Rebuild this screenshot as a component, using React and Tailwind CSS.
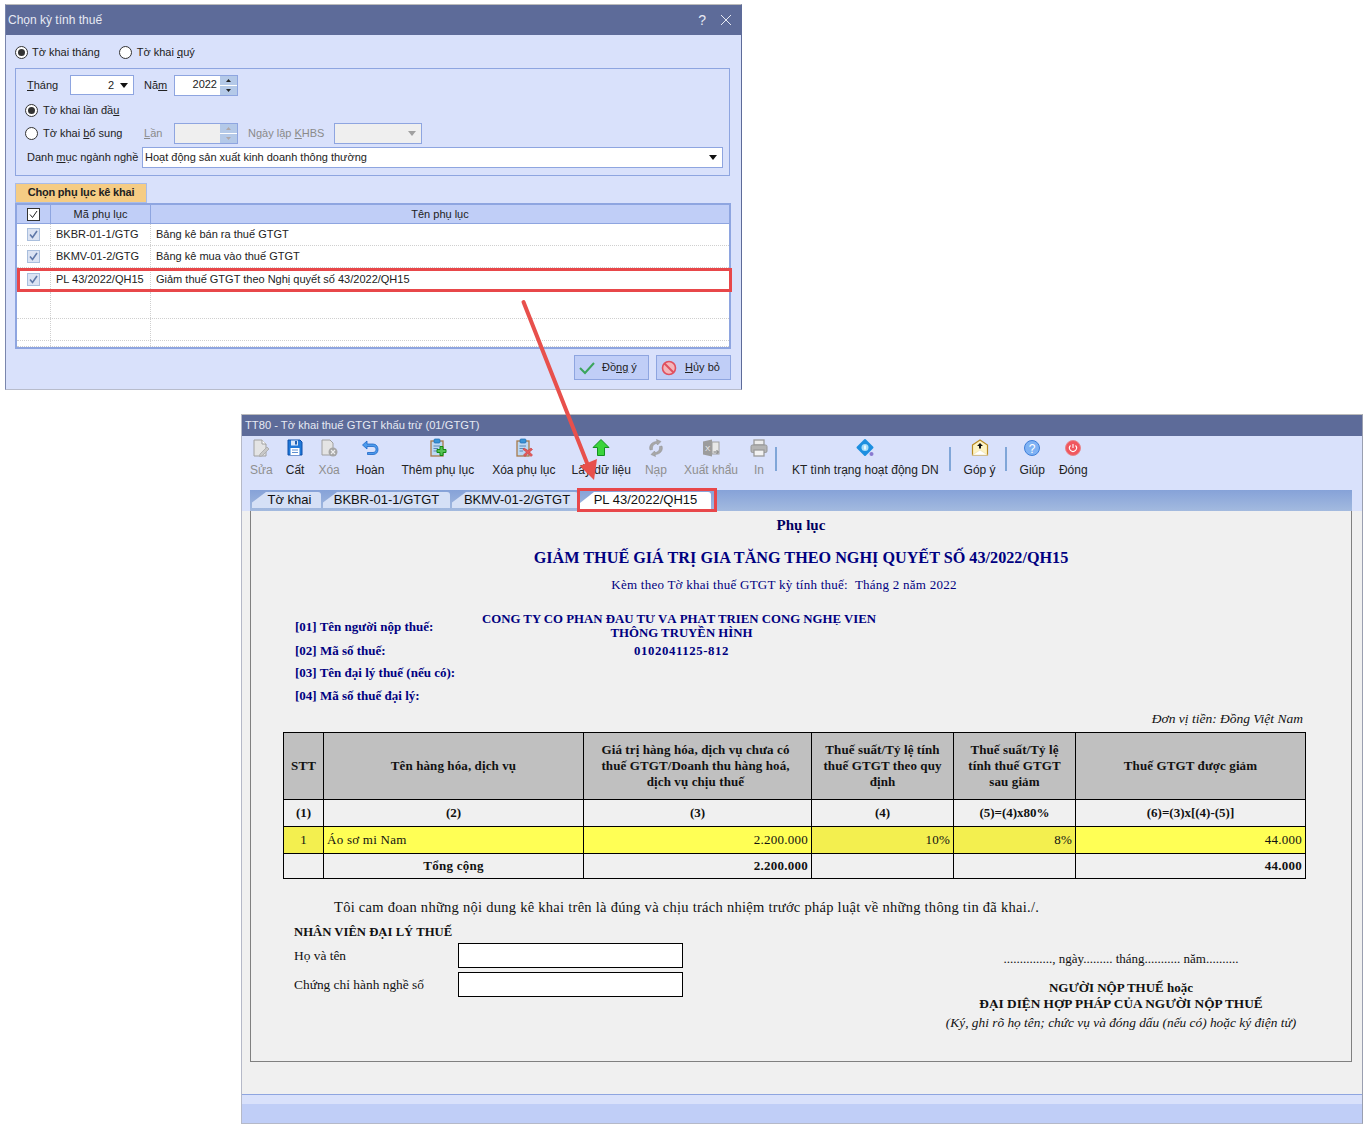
import React from "react";

const Radio = ({ on }) => (
  <span className="w-[13px] h-[13px] rounded-full border border-[#333] bg-white flex items-center justify-center shrink-0">
    {on && <span className="w-[7px] h-[7px] rounded-full bg-[#333]" />}
  </span>
);

const Caret = ({ gray }) => (
  <svg width="8" height="5" viewBox="0 0 8 5" className="shrink-0"><path d="M0 0H8L4 5Z" fill={gray ? "#a0a0a0" : "#111"} /></svg>
);

const Spin = ({ value, disabled }) => (
  <div className={`w-[64px] h-[21px] border border-[#8ea5e0] flex ${disabled ? "bg-[#efefef]" : "bg-white"}`}>
    <div className="flex-1 text-right pr-[3px] leading-[17px]">{value}</div>
    <div className="w-[17px] flex flex-col bg-[#b4c9e8]">
      <div className="flex-1 flex items-center justify-center border-b border-white">
        <svg width="5" height="3" viewBox="0 0 5 3"><path d="M2.5 0L5 3H0Z" fill={disabled ? "#b0a8a8" : "#222"} /></svg>
      </div>
      <div className="flex-1 flex items-center justify-center">
        <svg width="5" height="3" viewBox="0 0 5 3"><path d="M0 0H5L2.5 3Z" fill={disabled ? "#b0a8a8" : "#222"} /></svg>
      </div>
    </div>
  </div>
);

const Check = ({ head }) => (
  <span className={`w-[13px] h-[13px] border flex items-center justify-center ${head ? "bg-white border-[#333]" : "bg-[#dbe3f3] border-[#a9bedd]"}`}>
    <svg width="11" height="11" viewBox="0 0 11 11" fill="none"><path d="M2 5.5L4.5 8.5L9 2" stroke={head ? "#222" : "#5f78a8"} strokeWidth={head ? 1 : 1.6} /></svg>
  </span>
);

const rows = [
  ["BKBR-01-1/GTG", "Bảng kê bán ra thuế GTGT", "h-[22px]"],
  ["BKMV-01-2/GTG", "Bảng kê mua vào thuế GTGT", "h-[22px]"],
  ["PL 43/2022/QH15", "Giảm thuế GTGT theo Nghị quyết số 43/2022/QH15", "h-[24px]"],
  ["", "", "h-[27px]"],
  ["", "", "h-[22px]"],
  ["", "", "h-[6px]"],
];

function Dialog() {
  return (
    <section className="absolute left-[5px] top-[4px] w-[737px] h-[386px] border-t border-[#bbbbbb] border-l border-r border-b border-l-[#7a86ad] border-r-[#5d6b99] border-b-[#b8bccb] bg-[#d9e1fb] flex flex-col text-[11px] text-[#222] whitespace-nowrap">
      <div className="h-[30px] shrink-0 bg-[#5d6b99] text-[#e6e9f3] text-[12px] flex items-center pl-[2px] pr-[9px]">
        <span className="flex-1">Chọn kỳ tính thuế</span>
        <span className="text-[14px] mr-[14px]">?</span>
        <svg width="12" height="12" viewBox="0 0 12 12" fill="none"><path d="M1 1L11 11M11 1L1 11" stroke="#e6e9f3" /></svg>
      </div>
      <div className="flex flex-col pl-[9px] pr-[10px]">
        <div className="flex items-center h-[16px] mt-[9px]">
          <Radio on />
          <span className="ml-[4px]">Tờ khai thán<u>g</u></span>
          <span className="ml-[19px]"><Radio /></span>
          <span className="ml-[5px]">Tờ khai <u>q</u>uý</span>
        </div>
        <div className="mt-[8px] h-[108px] border border-[#8ea5e0] pl-[11px] pr-[6px] pt-[6px] w-[715px]">
          <div className="flex items-center h-[20px]">
            <span className="w-[43px]"><u>T</u>háng</span>
            <div className="w-[64px] h-[20px] bg-white border border-[#8ea5e0] flex items-center justify-end pr-[5px] gap-[6px]">
              <span>2</span>
              <Caret />
            </div>
            <span className="ml-[10px] w-[30px]">Nă<u>m</u></span>
            <Spin value="2022" />
          </div>
          <div className="flex items-center h-[14px] mt-[8px] -ml-[2px]">
            <Radio on />
            <span className="ml-[5px]">Tờ khai lần đầ<u>u</u></span>
          </div>
          <div className="flex items-center h-[21px] mt-[6px] -ml-[2px]">
            <Radio />
            <span className="ml-[5px] w-[101px]">Tờ khai <u>b</u>ổ sung</span>
            <span className="w-[30px] text-[#8a8a8a]"><u>L</u>ần</span>
            <Spin disabled value="" />
            <span className="ml-[10px] w-[86px] text-[#8a8a8a]">Ngày lập <u>K</u>HBS</span>
            <div className="w-[88px] h-[21px] bg-[#efefef] border border-[#8ea5e0] flex items-center justify-end pr-[5px]">
              <Caret gray />
            </div>
          </div>
          <div className="flex items-center h-[21px] mt-[3px]">
            <span className="w-[115px]">Danh <u>m</u>ục ngành nghề</span>
            <div className="flex-1 h-[21px] bg-white border border-[#8ea5e0] flex items-center pl-[2px] pr-[5px] leading-none">
              <span className="flex-1">Hoạt động sản xuất kinh doanh thông thường</span>
              <Caret />
            </div>
          </div>
        </div>
        <div className="mt-[7px] w-[132px] h-[20px] pb-[1px] bg-[#f5cc84] border border-[#a9bce8] flex items-center justify-center font-bold tracking-[-0.2px]">Chọn phụ lục kê khai</div>
        <div className="w-[716px] h-[146px] border-2 border-[#8ea5e0] bg-white overflow-hidden">
          <div className="flex h-[19px] bg-[#c0cef7] border-b border-[#8ea5e0]">
            <div className="w-[34px] flex items-center justify-center border-r border-[#8ea5e0]"><Check head /></div>
            <div className="w-[100px] flex items-center justify-center border-r border-[#8ea5e0]">Mã phụ lục</div>
            <div className="flex-1 flex items-center justify-center">Tên phụ lục</div>
          </div>
          {rows.map(([a, b, h], i) => (
            <div key={i} className={`flex ${h} border-b border-dotted border-[#cfcfcf]`}>
              <div className="w-[34px] flex items-center justify-center border-r border-dotted border-[#cfcfcf]">{a && <Check />}</div>
              <div className="w-[100px] pl-[5px] flex items-center border-r border-dotted border-[#cfcfcf]">{a}</div>
              <div className="flex-1 pl-[5px] flex items-center">{b}</div>
            </div>
          ))}
        </div>
        <div className="flex justify-end gap-[7px] mt-[6px] w-[716px]">
          <button className="w-[75px] h-[25px] bg-[#c0cef7] border border-[#8ea5e0] flex items-center pl-[4px]">
            <svg width="16" height="14" viewBox="0 0 16 14" fill="none"><path d="M1 7L6 12L15 2" stroke="#3ba55c" strokeWidth="2" /></svg>
            <span className="ml-[7px]">Đồ<u>ng</u> ý</span>
          </button>
          <button className="w-[75px] h-[25px] bg-[#c0cef7] border border-[#8ea5e0] flex items-center pl-[4px]">
            <svg width="16" height="16" viewBox="0 0 16 16" fill="none"><circle cx="8" cy="8" r="6.5" fill="#f3b6bb" stroke="#e0505f" strokeWidth="1.6" /><path d="M3.5 3.5L12.5 12.5" stroke="#e0505f" strokeWidth="2" /></svg>
            <span className="ml-[8px]"><u>H</u>ủy bỏ</span>
          </button>
        </div>
      </div>
    </section>
  );
}

const IconBox = ({ children }) => <svg width="20" height="20" viewBox="0 0 20 20" fill="none" className="shrink-0">{children}</svg>;

const icons = {
  edit: (
    <IconBox>
      <path d="M3 2H11L15 6V18H3Z" fill="#e4e4e4" stroke="#a0a0a0" />
      <path d="M11 2V6H15" stroke="#a0a0a0" fill="#fff" />
      <path d="M9 16L16 9L18 11L11 18L8.5 18.5Z" fill="#c8c8c8" stroke="#b0b0b0" />
    </IconBox>
  ),
  save: (
    <IconBox>
      <path d="M3 2H15L17 4V17H3Z" fill="#1f78d8" stroke="#0f4fa8" />
      <rect x="6" y="2.5" width="7" height="5" fill="#d8e6f8" />
      <rect x="10" y="3" width="2" height="3.5" fill="#1f5fb0" />
      <rect x="5.5" y="10" width="9" height="7" fill="#fff" />
      <path d="M7 12H13M7 14.500H13" stroke="#5f8fd0" />
    </IconBox>
  ),
  del: (
    <IconBox>
      <path d="M3 2H11L14 5V17H3Z" fill="#e4e4e4" stroke="#a0a0a0" />
      <circle cx="14" cy="14" r="4.500" fill="#a6a6a6" />
      <path d="M12 12L16 16M16 12L12 16" stroke="#eee" strokeWidth="1.2" />
    </IconBox>
  ),
  undo: (
    <IconBox>
      <path d="M7 3L2.500 7L7 11V8.500H13C15 8.500 16 10 16 11.500C16 13 15 14.500 13 14.500H7.500V16.500H13C16.500 16.500 18 14 18 11.500C18 9 16.500 6 13 6H7Z" fill="#4d9bec" stroke="#1c66c6" strokeWidth=".8" />
    </IconBox>
  ),
  add: (
    <IconBox>
      <rect x="3" y="3" width="12" height="15" fill="#bcd8f4" stroke="#a87a4a" strokeWidth="1.3" />
      <rect x="6" y="1" width="6" height="4" rx="1" fill="#3a94d8" stroke="#1d6cb0" strokeWidth=".7" />
      <path d="M5.500 8H12M5.500 10.500H10M5.500 13H9" stroke="#5a8ab8" />
      <path d="M12 8.500H15V11.500H18V14.500H15V17.500H12V14.500H9V11.500H12Z" fill="#55c255" stroke="#128a12" />
    </IconBox>
  ),
  remove: (
    <IconBox>
      <rect x="3" y="3" width="12" height="15" fill="#bcd8f4" stroke="#a87a4a" strokeWidth="1.3" />
      <rect x="6" y="1" width="6" height="4" rx="1" fill="#3a94d8" stroke="#1d6cb0" strokeWidth=".7" />
      <path d="M5.500 8H12M5.500 10.500H10M5.500 13H9" stroke="#5a8ab8" />
      <path d="M10 10L14 12.500L17 10L18.500 11.500L15.500 14L18.500 17L17 18.500L14 15.500L11 18.500L9.500 17L12.500 14L9 11.500Z" fill="#e55a5a" stroke="#c23a3a" strokeWidth=".6" />
    </IconBox>
  ),
  up: (
    <IconBox>
      <path d="M10 1.500L18 9.500H13.500V17.500H6.500V9.500H2Z" fill="#3bd43b" stroke="#12901f" />
    </IconBox>
  ),
  reload: (
    <IconBox>
      <path d="M4 12C2.500 7.500 6 3.500 11 3.500L10.500 1.500L15 3.500L11.500 7L11 5.500C8 5.500 6 8 6.500 11.500Z" fill="#a8a8a8" stroke="#8c8c8c" strokeWidth=".5" />
      <path d="M16 8C17.500 12.500 14 16.500 9 16.500L9.500 18.500L5 16.500L8.500 13L9 14.500C12 14.500 14 12 13.500 8.500Z" fill="#a8a8a8" stroke="#8c8c8c" strokeWidth=".5" />
    </IconBox>
  ),
  excel: (
    <IconBox>
      <path d="M2 3.500L11 1.500V18.500L2 16.500Z" fill="#9c9c9c" />
      <rect x="11" y="4" width="7" height="12" fill="#e8e8e8" stroke="#a0a0a0" />
      <text x="4" y="13" fontSize="8" fill="#eee" fontFamily="Liberation Sans">X</text>
      <path d="M12.500 14H17M15.500 12L17.500 14L15.500 16" stroke="#777" />
    </IconBox>
  ),
  print: (
    <IconBox>
      <rect x="5" y="2" width="10" height="5" fill="#ececec" stroke="#9a9a9a" strokeWidth="1.3" />
      <rect x="2" y="7" width="16" height="7.500" rx="1.500" fill="#b4b4b4" stroke="#969696" />
      <rect x="5" y="12" width="10" height="6" fill="#f2f2f2" stroke="#9a9a9a" strokeWidth="1.3" />
    </IconBox>
  ),
  check: (
    <IconBox>
      <path d="M10 2L17.500 9.500L10 17L2.500 9.500Z" fill="#1d8fe0" stroke="#1d8fe0" strokeWidth="2" strokeLinejoin="round" />
      <circle cx="10" cy="9.500" r="3.500" fill="#a6dcf8" />
      <path d="M10 7.500V11.500" stroke="#fff" strokeWidth="1.500" />
      <circle cx="16.500" cy="16" r="2" fill="#8a7ad0" />
    </IconBox>
  ),
  mail: (
    <IconBox>
      <path d="M2.500 7L10 2L17.500 7V17H2.500Z" fill="#fdf3c4" stroke="#b88a22" strokeWidth="1.2" />
      <path d="M2.500 17L10 12L17.500 17H2.500Z" fill="#fff" stroke="#e8d9a0" strokeWidth=".5" />
      <path d="M10 5L13 8H11V10.500H9V8H7Z" fill="#111" />
    </IconBox>
  ),
  help: (
    <IconBox>
      <circle cx="10" cy="10" r="7.500" fill="#7fb2f4" stroke="#3f7fd8" />
      <text x="10" y="14.500" textAnchor="middle" fontSize="12" fill="#fff" fontFamily="Liberation Sans">?</text>
    </IconBox>
  ),
  power: (
    <IconBox>
      <circle cx="10" cy="10" r="7.500" fill="#f0575f" stroke="#e8868c" />
      <path d="M7.500 7.500A3.500 3.500 0 1 0 12.500 7.500" stroke="#fff" strokeWidth="1.100" />
      <path d="M10 6V10" stroke="#fff" strokeWidth="1.100" />
    </IconBox>
  ),
};

const tools = [
  ["edit", "Sửa", true, "-mr-[3px]"], ["save", "Cất", false, "-mr-[2px]"], ["del", "Xóa", true, ""], ["undo", "Hoàn", false, "mr-[1px]"],
  ["add", "Thêm phụ lục", false, "mr-[2px]"], ["remove", "Xóa phụ lục", false, ""], ["up", "Lấy dữ liệu", false, "-mr-[2px]"],
  ["reload", "Nạp", true, "mr-[1px]"], ["excel", "Xuất khẩu", true, ""], ["print", "In", true, ""],
];

const Tool = ({ icon, label, dim, cls = "" }) => (
  <div className={`flex flex-col items-center shrink-0 ${cls}`}>
    <div className="h-[20px] w-0 mt-[2px] flex justify-center">{icons[icon]}</div>
    <span className={`mt-[4px] leading-[16px] ${dim ? "text-[#8f8f8f]" : "text-[#222]"}`}>{label}</span>
  </div>
);

const Sep = ({ cls }) => <div className={`w-[2px] h-[24px] mt-[11px] bg-[#80a6d8] shrink-0 ${cls}`} />;

const tabs = [
  ["Tờ khai", "w-[69px] pl-[6px]"],
  ["BKBR-01-1/GTGT", "w-[127px]"],
  ["BKMV-01-2/GTGT", "w-[126px] pl-[4px]"],
];

function Toolbar() {
  return (
    <div className="h-[54px] shrink-0 bg-[#d9e1fb] flex gap-[16px] pl-[8px] text-[12px] whitespace-nowrap">
      {tools.map(([i, l, d, c]) => <Tool key={l} icon={i} label={l} dim={d} cls={c} />)}
      <Sep cls="-ml-[5px] -mr-[1px]" />
      <Tool icon="check" label="KT tình trạng hoạt động DN" />
      <Sep cls="-ml-[6px] -mr-[3px]" />
      <Tool icon="mail" label="Góp ý" />
      <Sep cls="-ml-[7px] -mr-[3px]" />
      <Tool icon="help" label="Giúp" cls="-mr-[2px]" />
      <Tool icon="power" label="Đóng" />
    </div>
  );
}

function Tabs() {
  return (
    <div className="h-[21px] shrink-0 bg-[#d9e1fb] pl-[8px] pr-[10px]">
      <div className="h-full bg-gradient-to-b from-[#86a2d8] to-[#a3badf] flex items-end pl-[2px] gap-[2px] text-[13px] text-[#111] whitespace-nowrap">
        {tabs.map(([t, w]) => (
          <div key={t} className={`${w} h-[16px] mb-[3px] bg-[#d5e0f6] rounded-tr-[3px] flex items-center justify-center [clip-path:polygon(14px_0,100%_0,100%_100%,0_100%,0_65%)]`}>{t}</div>
        ))}
        <div className="w-[131px] h-[17px] mb-[2px] pb-[1px] bg-white rounded-tr-[3px] flex items-center justify-center [clip-path:polygon(14px_0,100%_0,100%_100%,0_100%,0_65%)]">PL 43/2022/QH15</div>
      </div>
    </div>
  );
}

const Th = ({ children, cls = "" }) => <th className={`border border-black bg-[#c0c0c0] font-bold px-[6px] leading-[16px] tracking-[0.1px] ${cls}`}>{children}</th>;
const Td = ({ children, cls = "" }) => <td className={`border border-black px-[3px] ${cls}`}>{children}</td>;

function TaxTable() {
  return (
    <table className="mt-[5px] ml-[32px] w-[1022px] table-fixed border-collapse text-[13px] text-[#111]">
      <colgroup>
        <col className="w-[40px]" /><col className="w-[260px]" /><col className="w-[228px]" />
        <col className="w-[142px]" /><col className="w-[122px]" /><col className="w-[230px]" />
      </colgroup>
      <tbody>
        <tr className="h-[67px]">
          <Th>STT</Th>
          <Th>Tên hàng hóa, dịch vụ</Th>
          <Th cls="pr-[10px]">Giá trị hàng hóa, dịch vụ chưa có thuế GTGT/Doanh thu hàng hoá, dịch vụ chịu thuế</Th>
          <Th>Thuế suất/Tỷ lệ tính thuế GTGT theo quy định</Th>
          <Th cls="px-[12px]">Thuế suất/Tỷ lệ tính thuế GTGT sau giảm</Th>
          <Th>Thuế GTGT được giảm</Th>
        </tr>
        <tr className="h-[27px] text-center font-bold">
          <Td>(1)</Td><Td>(2)</Td><Td>(3)</Td><Td>(4)</Td><Td>(5)=(4)x80%</Td><Td>(6)=(3)x[(4)-(5)]</Td>
        </tr>
        <tr className="h-[27px] tracking-[0.25px]">
          <Td cls="text-center bg-[#f3ef4f]">1</Td>
          <Td cls="bg-[#ffff55]">Áo sơ mi Nam</Td>
          <Td cls="text-right bg-[#ffff55]">2.200.000</Td>
          <Td cls="text-right bg-[#f3ef4f]">10%</Td>
          <Td cls="text-right bg-[#f3ef4f]">8%</Td>
          <Td cls="text-right bg-[#ffff55]">44.000</Td>
        </tr>
        <tr className="h-[25px] font-bold tracking-[0.25px]">
          <Td />
          <Td cls="text-center">Tổng cộng</Td>
          <Td cls="text-right">2.200.000</Td>
          <Td /><Td />
          <Td cls="text-right">44.000</Td>
        </tr>
      </tbody>
    </table>
  );
}

function Sheet() {
  return (
    <div className="h-[551px] shrink-0 ml-[8px] mr-[10px] border-l border-r border-b border-[#808080] font-['Liberation_Serif',serif]">
      <div className="pt-[4px] text-center text-[15px] font-bold leading-[20px] text-[#000060]">Phụ lục</div>
      <div className="mt-[12px] text-center text-[16.2px] font-bold leading-[22px] text-[#000080]">GIẢM THUẾ GIÁ TRỊ GIA TĂNG THEO NGHỊ QUYẾT SỐ 43/2022/QH15</div>
      <div className="mt-[7px] pr-[34px] text-center text-[13px] leading-[18px] text-[#000080] tracking-[0.25px]">Kèm theo Tờ khai thuế GTGT kỳ tính thuế:&nbsp;&nbsp;Tháng 2 năm 2022</div>
      <div className="mt-[18px] flex pl-[44px] text-[13px] font-bold text-[#000080] h-[94px]">
        <div className="w-[175px] pt-[5px] leading-[20px] whitespace-nowrap">
          <div>[01] Tên người nộp thuế:</div>
          <div className="mt-[4px]">[02] Mã số thuế:</div>
          <div className="mt-[2px]">[03] Tên đại lý thuế (nếu có):</div>
          <div className="mt-[3px]">[04] Mã số thuế đại lý:</div>
        </div>
        <div className="w-[418px] text-center text-[12.8px]">
          <div className="mt-[3px] h-[10px] leading-[9px] overflow-hidden whitespace-nowrap">CÔNG TY CỔ PHẦN ĐẦU TƯ VÀ PHÁT TRIỂN CÔNG NGHỆ VIỄN</div>
          <div className="mt-[1px] pl-[5px] leading-[14px]">THÔNG TRUYỀN HÌNH</div>
          <div className="mt-[4px] pl-[5px] leading-[14px] tracking-[0.6px]">0102041125-812</div>
        </div>
      </div>
      <div className="mt-[5px] pr-[48px] text-right text-[13.5px] italic leading-[16px] text-[#111]">Đơn vị tiền: Đồng Việt Nam</div>
      <TaxTable />
      <div className="mt-[18px] pl-[83px] text-[14.5px] leading-[20px] text-[#111] tracking-[0.27px]">Tôi cam đoan những nội dung kê khai trên là đúng và chịu trách nhiệm trước pháp luật về những thông tin đã khai./.</div>
      <div className="mt-[6px] pl-[43px] text-[12.7px] font-bold leading-[18px] text-[#111]">NHÂN VIÊN ĐẠI LÝ THUẾ</div>
      <div className="flex pl-[43px] mt-[2px] text-[13.4px] text-[#111]">
        <div className="w-[389px]">
          <div className="flex items-center">
            <span className="w-[164px] pt-[2px]">Họ và tên</span>
            <div className="w-[225px] h-[25px] bg-white border border-black" />
          </div>
          <div className="flex items-center mt-[4px]">
            <span className="w-[164px] pt-[2px]">Chứng chỉ hành nghề số</span>
            <div className="w-[225px] h-[25px] bg-white border border-black" />
          </div>
        </div>
        <div className="ml-[238px] w-[400px] text-center leading-[16px] text-[13px]">
          <div className="mt-[8px]">..............., ngày......... tháng........... năm..........</div>
          <div className="mt-[13px] font-bold">NGƯỜI NỘP THUẾ hoặc</div>
          <div className="font-bold text-[13.3px]">ĐẠI DIỆN HỢP PHÁP CỦA NGƯỜI NỘP THUẾ</div>
          <div className="mt-[3px] italic text-[13.35px]">(Ký, ghi rõ họ tên; chức vụ và đóng dấu (nếu có) hoặc ký điện tử)</div>
        </div>
      </div>
    </div>
  );
}

function MainWindow() {
  return (
    <section className="absolute left-[241px] top-[414px] w-[1122px] h-[710px] border-t border-[#bbbbbb] border-l border-r border-b border-l-[#b5b9c8] border-r-[#9a9fb0] border-b-[#b5b9c8] bg-[#f0f0f0] flex flex-col text-[12px]">
      <div className="h-[21px] shrink-0 bg-[#5d6b99] text-[#e6e9f3] text-[11.2px] flex items-center pl-[3px]">TT80 - Tờ khai thuế GTGT khấu trừ (01/GTGT)</div>
      <Toolbar />
      <Tabs />
      <Sheet />
      <div className="h-[32px] shrink-0" />
      <div className="flex-1 border-t border-[#8ea5e0] bg-[#c0cef7] flex flex-col">
        <div className="h-[9px] bg-[#d9e1fb]" />
      </div>
    </section>
  );
}

export default function App() {
  return (
    <div className="relative w-[1363px] h-[1124px] overflow-hidden bg-white font-['Liberation_Sans',sans-serif]">
      <Dialog />
      <MainWindow />
      <div className="absolute left-[17px] top-[268px] w-[715px] h-[24px] border-[3px] border-[#e8474a]" />
      <div className="absolute left-[577px] top-[488px] w-[140px] h-[24px] border-[3px] border-[#e8474a]" />
      <svg className="absolute left-0 top-0 pointer-events-none" width="1363" height="1124" viewBox="0 0 1363 1124" fill="none">
        <path d="M523.500 302L587 463" stroke="#e8504c" strokeWidth="4" strokeLinecap="round" />
        <path d="M594 480L580 466L597 459Z" fill="#e8504c" />
      </svg>
    </div>
  );
}
